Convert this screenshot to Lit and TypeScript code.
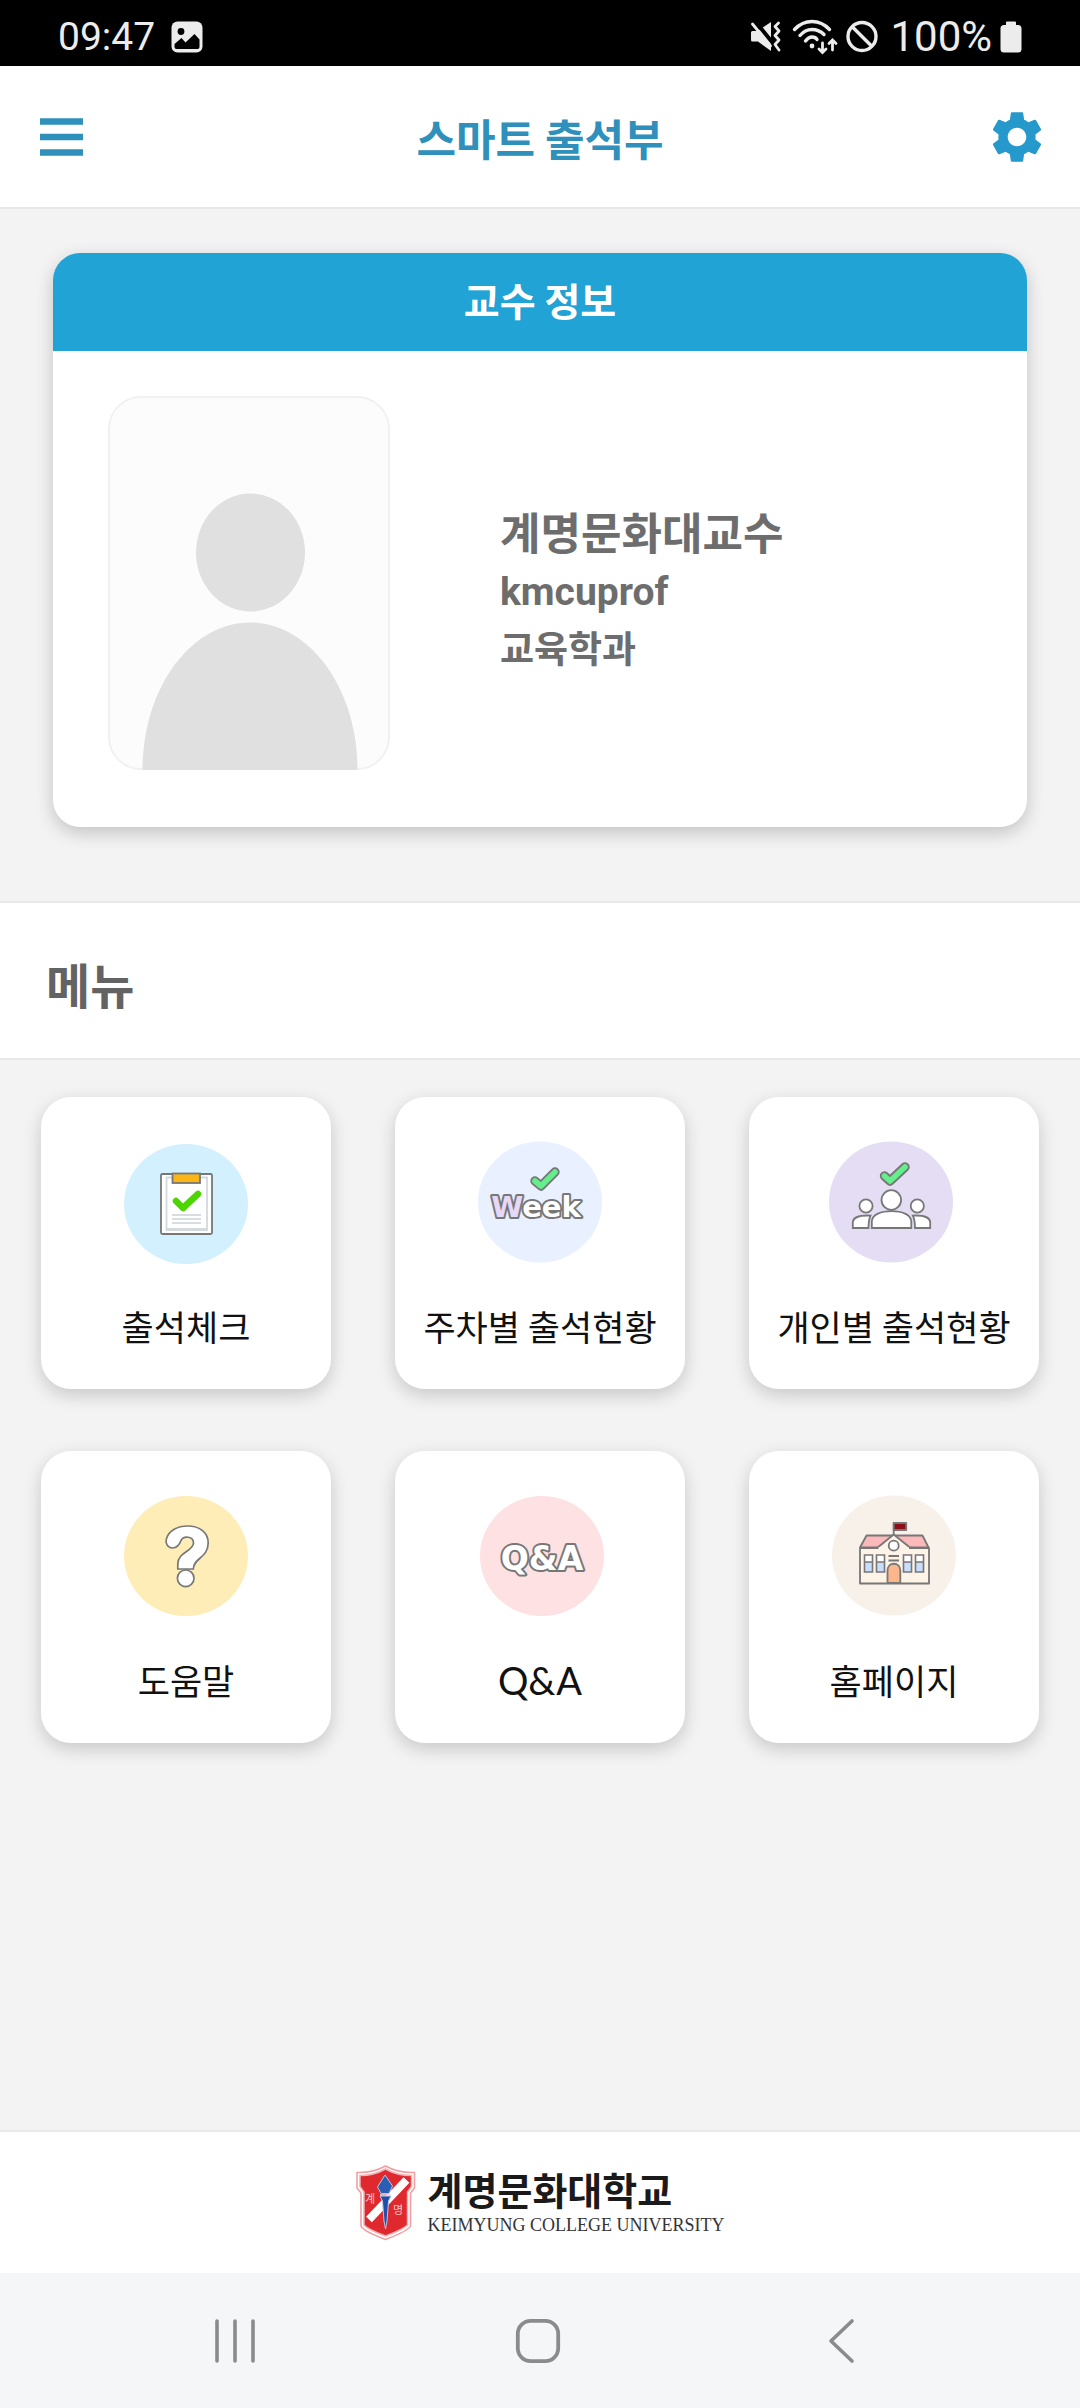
import { LitElement, html, svg, css, type SVGTemplateResult } from "lit";
import { customElement, property } from "lit/decorators.js";

interface MenuItem {
  label: string;
  latin?: boolean;
  icon: SVGTemplateResult;
}

const LINE = "#777777";

const checkIcon = svg`
  <ellipse cx="66" cy="64" rx="62" ry="60" fill="#d3f0fe" />
  <rect x="41" y="34" width="51" height="60" rx="1.5" fill="#fff" stroke="${LINE}" stroke-width="1.8" />
  <path d="M46.5 37.5V89.5H87V37.5Z" fill="#fff" stroke="#d3d9dd" stroke-width="1.8" />
  <path d="M46 89.5H87.5" stroke="#d3d9dd" stroke-width="3" />
  <rect x="52.5" y="33.5" width="27.5" height="9.5" fill="#fbb615" stroke="${LINE}" stroke-width="1.8" />
  <path d="M56 61L63 68L78 54" fill="none" stroke="#4cd600" stroke-width="6.5" stroke-linecap="round" stroke-linejoin="round" />
  <path d="M52 75H81M52 79H81M52 83H81" stroke="#cbd2d8" stroke-width="1.5" />
`;

const tick = (points: string) => svg`
  <path d=${points} fill="none" stroke="${LINE}" stroke-width="9.4" stroke-linecap="round" stroke-linejoin="round" />
  <path d=${points} fill="none" stroke="#63f08c" stroke-width="5.6" stroke-linecap="round" stroke-linejoin="round" />
`;

const weekIcon = svg`
  <ellipse cx="66" cy="62" rx="62" ry="60.5" fill="#e9f0ff" />
  ${tick("M61 41L67 46L81 32")}
  <text class="badge-text" x="62" y="77" font-size="29" text-anchor="middle"><tspan fill="#e6d9f7">W</tspan>eek</text>
`;

const peopleIcon = svg`
  <ellipse cx="63" cy="62" rx="62" ry="60.5" fill="#e4ddf4" />
  ${tick("M56.5 36L62 41L77 27")}
  <g fill="#fff" stroke="${LINE}" stroke-width="1.8">
    <circle cx="38" cy="66" r="6.6" />
    <circle cx="89.3" cy="66" r="6.6" />
    <path d="M24.8 88V82C25.5 77 31 75 42.5 75.6C41 79 40.5 83 40.5 88Z" />
    <path d="M102.2 88V82C101.5 77 96 75 84.8 75.6C86.5 79 87 83 87 88Z" />
    <path d="M43.8 88V81C44.5 74.5 53 71.2 63.5 71.2S82.5 74.5 83.3 81V88Z" />
    <circle cx="63.3" cy="60" r="9.8" />
  </g>
`;

const helpIcon = svg`
  <ellipse cx="66" cy="62" rx="62" ry="60" fill="#feedb7" />
  <g fill="#fff" stroke="${LINE}" stroke-width="1.7">
    <path d="M57.8 75V70C57.8 58 73.5 57 73.5 49C73.5 42 63.5 41.5 61 46.5C59.5 50.5 56.5 54 52.5 54C47.5 54 45 49 46.5 44.5C49 36.5 57.5 32 67.5 32C80 32 88.2 38.5 88.2 49C88.2 64 73.3 64 73.3 75Z" />
    <circle cx="65.7" cy="84.3" r="8.3" />
  </g>
`;

const qnaIcon = svg`
  <ellipse cx="68" cy="62" rx="62" ry="60" fill="#fee1e2" />
  <text class="badge-text" x="68" y="76" font-size="33" text-anchor="middle">Q&amp;A</text>
`;

const schoolWindow = (x: number) => svg`
  <rect x=${x} y="61" width="8" height="17" fill="#fff" />
  <rect x=${x} y="68" width="8" height="10" fill="#c9defd" />
  <path d="M${x} 61H${x + 8}V78H${x}ZM${x} 68H${x + 8}" fill="none" stroke="${LINE}" stroke-width="1.6" />
`;

const schoolIcon = svg`
  <ellipse cx="66" cy="61.5" rx="62" ry="60" fill="#f7f1ea" />
  <g stroke="${LINE}" stroke-width="1.8" stroke-linejoin="round">
    <rect x="32" y="54" width="69" height="35.5" fill="#fdf3e7" />
    <path d="M32 53.5L38.5 41.5H94.5L100.5 53.5Z" fill="#fcb9b9" />
    <path d="M49 54L65.7 40.5L82.5 54" fill="#fdf3e7" />
    <path d="M50.5 54.9H81" stroke="#fdf3e7" stroke-width="3" />
    <path d="M65.7 41V28.5" fill="none" />
    <rect x="65.7" y="29" width="12.5" height="7" fill="#8c0f18" />
    <circle cx="65.7" cy="51.7" r="5" fill="#fff" />
    <path d="M60.5 62H71M60.5 66.5H71" fill="none" />
    <path d="M59.5 89V76.5C59.5 67.5 72.3 67.5 72.3 76.5V89Z" fill="#fbb68b" />
  </g>
  ${[36.5, 48.5, 75.5, 87.5].map(schoolWindow)}
`;

const MENU: MenuItem[] = [
  { label: "출석체크", icon: checkIcon },
  { label: "주차별 출석현황", icon: weekIcon },
  { label: "개인별 출석현황", icon: peopleIcon },
  { label: "도움말", icon: helpIcon },
  { label: "Q&A", latin: true, icon: qnaIcon },
  { label: "홈페이지", icon: schoolIcon },
];

@customElement("status-bar")
export class StatusBar extends LitElement {
  static styles = css`
    :host {
      display: flex;
      align-items: center;
      justify-content: space-between;
      height: 66px;
      padding: 8px 58px 0;
      box-sizing: border-box;
      background: #000;
      color: #ececec;
      font: 400 39px/58px Roboto, "Liberation Sans", sans-serif;
    }
    .left,
    .right {
      display: flex;
      align-items: center;
    }
    .left {
      gap: 16px;
    }
    .right {
      gap: 8px;
    }
    .level {
      margin-left: 4px;
      font-size: 42px;
    }
    svg {
      display: block;
    }
  `;

  render() {
    return html`
      <div class="left">
        <span>09:47</span>
        <svg width="32" height="32" viewBox="0 0 32 32" aria-hidden="true">
          <rect x="0.5" y="0.5" width="31" height="31" rx="6" fill="#ececec" />
          <circle cx="10" cy="10.5" r="3.4" fill="#000" />
          <path d="M3.5 26V23L10.5 17L14.5 21.5L23.5 13L28.5 18.5V26Q28.5 28 26.5 28H5.5Q3.5 28 3.5 26Z" fill="#000" />
        </svg>
      </div>
      <div class="right">
        <svg width="34" height="32" viewBox="0 0 34 32" aria-hidden="true">
          <path d="M1 11.5Q1 10 2.5 10H7.5L21 1V30L8 20.5H2.5Q1 20.5 1 19Z" fill="#ececec" />
          <path d="M5 0L26 26" stroke="#000" stroke-width="4" />
          <path d="M2.5 3L20.5 25" stroke="#ececec" stroke-width="2.8" stroke-linecap="round" />
          <path d="M28.5 2L25 5.5L29 10L25 14.5L29 19L25 23.5L29 29" fill="none" stroke="#ececec" stroke-width="2.8" stroke-linecap="round" stroke-linejoin="round" />
        </svg>
        <svg width="46" height="36" viewBox="0 0 46 36" aria-hidden="true">
          <g fill="none" stroke="#ececec" stroke-width="3.4" stroke-linecap="round">
            <path d="M2.5 10.5Q10 2.5 20 2.5T37.5 10.5" />
            <path d="M8 16.5Q13 10.5 20 10.5T32 15.5" />
            <path d="M13.5 22Q16.5 18 20 18T25 20.5" />
            <path d="M30.5 24V33M27 30L30.5 33.5L34 30" stroke-width="2.8" />
            <path d="M40.5 31V21M37 24.5L40.5 21L44 24.5" stroke-width="2.8" />
          </g>
          <circle cx="20" cy="27" r="2.4" fill="#ececec" />
        </svg>
        <svg width="32" height="34" viewBox="0 0 32 34" aria-hidden="true">
          <circle cx="16" cy="16.5" r="14" fill="none" stroke="#ececec" stroke-width="3.4" />
          <path d="M6.5 7L25.5 26" stroke="#ececec" stroke-width="3.4" />
        </svg>
        <span class="level">100%</span>
        <svg width="22" height="32" viewBox="0 0 22 32" aria-hidden="true">
          <path d="M7 0.5H15Q16 0.5 16 1.5V4H18Q21.5 4 21.5 7.5V28Q21.5 31.5 18 31.5H4Q0.5 31.5 0.5 28V7.5Q0.5 4 4 4H6V1.5Q6 0.5 7 0.5Z" fill="#ececec" />
        </svg>
      </div>
    `;
  }
}

@customElement("menu-tile")
export class MenuTile extends LitElement {
  @property({ attribute: false }) item!: MenuItem;

  static styles = css`
    :host {
      display: block;
    }
    .tile {
      display: flex;
      flex-direction: column;
      align-items: center;
      width: 100%;
      height: 292px;
      padding: 43px 0 0;
      border: 0;
      border-radius: 30px;
      background: #fff;
      box-shadow: 0 6px 18px rgba(0, 0, 0, 0.18);
      color: #111;
      cursor: pointer;
    }
    .icon {
      display: block;
      width: 132px;
      height: 126px;
    }
    .label {
      margin-top: 34px;
      font: 400 35px/52px "Noto Sans CJK KR", sans-serif;
      white-space: nowrap;
    }
    .latin {
      font-family: Lato, "Noto Sans CJK KR", sans-serif;
      font-size: 38px;
    }
    .badge-text {
      font-family: "DejaVu Sans", sans-serif;
      font-weight: 700;
      fill: #fff;
      stroke: #777777;
      stroke-width: 4px;
      stroke-linejoin: round;
      paint-order: stroke;
    }
  `;

  render() {
    const { label, latin, icon } = this.item;
    return html`
      <button class="tile" type="button">
        <svg class="icon" viewBox="0 0 132 126" aria-hidden="true">${icon}</svg>
        <span class="label ${latin ? "latin" : ""}">${label}</span>
      </button>
    `;
  }
}

@customElement("app-root")
export class AppRoot extends LitElement {
  static styles = css`
    :host {
      display: flex;
      flex-direction: column;
      min-height: 100vh;
      background: #f3f3f3;
      font-family: "Noto Sans CJK KR", sans-serif;
    }
    button {
      display: grid;
      place-items: center;
      padding: 0;
      border: 0;
      background: none;
      cursor: pointer;
    }
    svg {
      display: block;
    }
    h1,
    h2,
    p {
      margin: 0;
    }
    .app-bar {
      display: flex;
      align-items: center;
      justify-content: space-between;
      height: 141px;
      padding: 0 32px;
      border-bottom: 2px solid #e8e8e8;
      background: #fff;
    }
    .app-bar button {
      width: 62px;
      height: 62px;
    }
    .title {
      color: #2e90bb;
      font-size: 43px;
      line-height: 64px;
      font-weight: 700;
    }
    .profile {
      padding: 44px 53px 74px;
    }
    .card {
      border-radius: 27px;
      background: #fff;
      box-shadow: 0 6px 18px rgba(0, 0, 0, 0.2);
    }
    .card-title {
      padding: 14px 0 20px;
      border-radius: 27px 27px 0 0;
      background: #21a3d5;
      color: #fff;
      font-size: 39px;
      line-height: 64px;
      font-weight: 700;
      text-align: center;
    }
    .card-body {
      display: flex;
      align-items: center;
      gap: 110px;
      padding: 0 55px;
    }
    .photo {
      flex: none;
      margin: 45px 0 57px;
    }
    .info {
      color: #6d6d6d;
      font-weight: 700;
      font-size: 37px;
      line-height: 58px;
    }
    .name {
      font-size: 44px;
    }
    .user-id {
      font-family: Roboto, sans-serif;
      font-size: 39px;
      line-height: 1;
    }
    .section-title {
      padding: 48px 46px 42px;
      border: solid #e8e8e8;
      border-width: 2px 0;
      background: #fff;
      color: #636363;
      font-size: 48px;
      line-height: 65px;
      font-weight: 700;
    }
    .menu {
      display: grid;
      grid-template-columns: repeat(3, 1fr);
      gap: 62px 64px;
      padding: 37px 41px;
    }
    main {
      flex: 1;
    }
    .school {
      display: flex;
      align-items: center;
      justify-content: center;
      gap: 12px;
      height: 141px;
      border-top: 2px solid #e8e8e8;
      background: #fff;
      color: #1a1a1a;
    }
    .school-text {
      padding-bottom: 8px;
    }
    .school-name {
      font-size: 38px;
      line-height: 52px;
      font-weight: 700;
    }
    .school-latin {
      font-family: "Liberation Serif", serif;
      font-size: 18px;
      line-height: 20px;
      color: #333;
    }
    .crest-text {
      font-size: 11px;
      fill: #f9c4c5;
    }
    .nav {
      display: grid;
      grid-template-columns: repeat(3, 1fr);
      height: 135px;
      padding: 0 88px 0 84px;
      background: #f5f6f8;
    }
  `;

  render() {
    return html`
      <status-bar></status-bar>
      <header class="app-bar">
        <button type="button" aria-label="메뉴 열기">
          <svg width="46" height="38" viewBox="0 0 46 38" aria-hidden="true">
            <path d="M0 3.5H43M0 19H43M0 34.5H43" stroke="#2e90bb" stroke-width="6.5" />
          </svg>
        </button>
        <h1 class="title">스마트 출석부</h1>
        <button type="button" aria-label="설정">
          <svg width="62" height="62" viewBox="0 0 24 24" aria-hidden="true">
            <path fill="#2598cc" d="M19.14 12.94c.04-.3.06-.61.06-.94 0-.32-.02-.64-.07-.94l2.03-1.58c.18-.14.23-.41.12-.61l-1.92-3.32c-.12-.22-.37-.29-.59-.22l-2.39.96c-.5-.38-1.03-.7-1.62-.94l-.36-2.54c-.04-.24-.24-.41-.48-.41h-3.84c-.24 0-.43.17-.47.41l-.36 2.54c-.59.24-1.13.57-1.62.94l-2.39-.96c-.22-.08-.47 0-.59.22L2.74 8.87c-.12.21-.08.47.12.61l2.03 1.58c-.05.3-.09.63-.09.94s.02.64.07.94l-2.03 1.58c-.18.14-.23.41-.12.61l1.92 3.32c.12.22.37.29.59.22l2.39-.96c.5.38 1.03.7 1.62.94l.36 2.54c.05.24.24.41.48.41h3.84c.24 0 .44-.17.47-.41l.36-2.54c.59-.24 1.13-.56 1.62-.94l2.39.96c.22.08.47 0 .59-.22l1.92-3.32c.12-.22.07-.47-.12-.61l-2.01-1.58zM12 15.6c-1.98 0-3.6-1.62-3.6-3.6s1.62-3.6 3.6-3.6 3.6 1.62 3.6 3.6-1.62 3.6-3.6 3.6z" />
          </svg>
        </button>
      </header>

      <main>
        <section class="profile">
          <div class="card">
            <h2 class="card-title">교수 정보</h2>
            <div class="card-body">
              <svg class="photo" width="282" height="374" viewBox="0 0 282 374" role="img" aria-label="프로필 사진">
                <rect x="1" y="1" width="280" height="372" rx="32" fill="#fcfcfc" stroke="#f1f1f1" stroke-width="2" />
                <ellipse cx="142.5" cy="156.5" rx="54.5" ry="59" fill="#e0e0e0" />
                <path d="M34.5 374C34.5 292 83 226.5 142 226.5S249.5 292 249.5 374Z" fill="#e0e0e0" />
              </svg>
              <div class="info">
                <p class="name">계명문화대교수</p>
                <p><span class="user-id">kmcuprof</span></p>
                <p>교육학과</p>
              </div>
            </div>
          </div>
        </section>
        <h2 class="section-title">메뉴</h2>
        <section class="menu">
          ${MENU.map((item) => html`<menu-tile .item=${item}></menu-tile>`)}
        </section>
      </main>

      <footer class="school">
        <svg width="60" height="76" viewBox="0 0 60 76" aria-hidden="true">
          <path d="M29.5 1Q17 8 1 7.5V23L5 28V61Q7 66 29.5 74.5Q52 66 54.5 61V28L58.5 23V7.5Q42 8 29.5 1Z" fill="#fff" stroke="#f0a0a3" stroke-width="1.6" />
          <path d="M29.5 4Q18 10.5 4 10.5V21.5L8 27V60Q12 64.5 29.5 71Q47 64.5 51.5 60V27L55.5 21.5V10.5Q41 10.5 29.5 4Z" fill="#e0282f" stroke="#f3b1b3" stroke-width="1.5" />
          <path d="M50.5 15L13 54.5" stroke="#fff" stroke-width="8" />
          <text class="crest-text" x="9" y="38">계</text>
          <text class="crest-text" x="37" y="49">명</text>
          <path d="M29 10L36.5 21L33 28.5H25L21.5 22Z" fill="#2b5db3" stroke="#b9c8e6" stroke-width="1" />
          <path d="M24 31H35L32.5 36L31 56L29.5 64L28 56L26.5 36Z" fill="#1f4fa8" stroke="#b9c8e6" stroke-width="1" />
          <path d="M24 30H35" stroke="#e9d9dc" stroke-width="1.5" />
        </svg>
        <div class="school-text">
          <p class="school-name">계명문화대학교</p>
          <p class="school-latin">KEIMYUNG COLLEGE UNIVERSITY</p>
        </div>
      </footer>

      <nav class="nav" aria-label="시스템 탐색">
        <button type="button" aria-label="최근 앱">
          <svg width="44" height="46" viewBox="0 0 44 46" aria-hidden="true">
            <path d="M4 3V43M22 3V43M40 3V43" stroke="#8b8b8d" stroke-width="3.6" stroke-linecap="round" />
          </svg>
        </button>
        <button type="button" aria-label="홈">
          <svg width="46" height="46" viewBox="0 0 46 46" aria-hidden="true">
            <rect x="2.8" y="2.8" width="40.4" height="40.4" rx="13" fill="none" stroke="#8b8b8d" stroke-width="3.8" />
          </svg>
        </button>
        <button type="button" aria-label="뒤로">
          <svg width="28" height="46" viewBox="0 0 28 46" aria-hidden="true">
            <path d="M25 3L4 23L25 43" fill="none" stroke="#8b8b8d" stroke-width="3.6" stroke-linecap="round" stroke-linejoin="round" />
          </svg>
        </button>
      </nav>
    `;
  }
}
